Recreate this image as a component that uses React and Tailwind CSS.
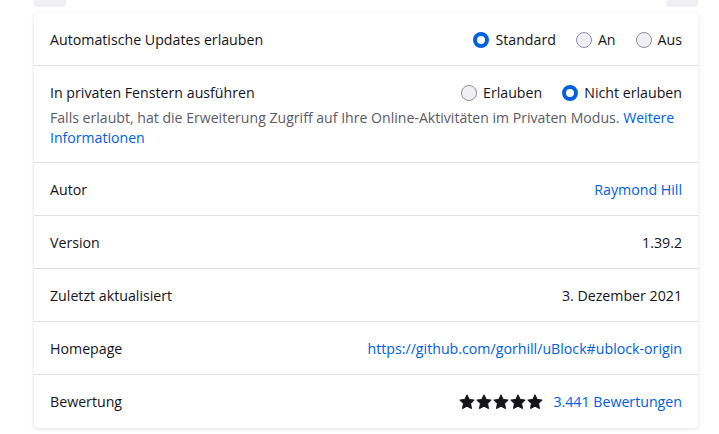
import React from 'react';

// Firefox about:addons style detail card
function Radio({ checked, label }) {
  return (
    <label className="flex items-center gap-[6px]">
      {checked ? (
        <span className="w-[16px] h-[16px] rounded-full border-[4px] border-[#0061e0] bg-white box-border" />
      ) : (
        <span className="w-[16px] h-[16px] rounded-full border border-[#8f8f9d] bg-[#f0f0f4] box-border" />
      )}
      <span>{label}</span>
    </label>
  );
}

function Star() {
  return (
    <svg width="16" height="16" viewBox="0 0 16 16" className="block">
      <path
        d="M8 0.8l2.2 4.6 5 0.7-3.6 3.5 0.9 5-4.5-2.4-4.5 2.4 0.9-5L0.8 6.1l5-0.7z"
        fill="#15141a"
        stroke="#15141a"
        strokeWidth="1"
        strokeLinejoin="round"
      />
    </svg>
  );
}

function Row({ label, children, last }) {
  return (
    <div
      className={`h-[53px] px-[16px] pt-[1px] flex items-center justify-between ${
        last ? '' : 'border-b border-[#e0e0e6]'
      }`}
    >
      <span>{label}</span>
      <div className="flex items-center">{children}</div>
    </div>
  );
}

export default function App() {
  return (
    <div
      className="w-[719px] h-[434px] bg-white overflow-hidden text-[14.2px] leading-[20px] text-[#15141a]"
      style={{ fontFamily: '"Open Sans", "Noto Sans", sans-serif' }}
    >
      <div className="ml-[34px] w-[664px]">
        <div className="flex justify-between">
          <div className="w-[32px] h-[7px] rounded-b-[4px] bg-[#f0f0f4]" />
          <div className="w-[32px] h-[7px] rounded-b-[4px] bg-[#f0f0f4]" />
        </div>

        <div className="mt-[6px] bg-white rounded-[4px] shadow-[0_1px_4px_rgba(12,12,13,0.12)]">
          <div className="h-[53px] px-[16px] pt-[1px] flex items-center justify-between border-b border-[#e0e0e6]">
            <span>Automatische Updates erlauben</span>
            <div className="flex items-center gap-[20px]">
              <Radio checked label="Standard" />
              <Radio label="An" />
              <Radio label="Aus" />
            </div>
          </div>

          <div className="px-[16px] pt-[17px] pb-[14px] border-b border-[#e0e0e6]">
            <div className="flex items-center justify-between">
              <span>In privaten Fenstern ausführen</span>
              <div className="flex items-center gap-[20px]">
                <Radio label="Erlauben" />
                <Radio checked label="Nicht erlauben" />
              </div>
            </div>
            <p className="mt-[5px] text-[14.1px] text-[#5b5b66]">
              Falls erlaubt, hat die Erweiterung Zugriff auf Ihre Online-Aktivitäten im Privaten Modus.{' '}
              <a className="text-[#0061e0]">Weitere Informationen</a>
            </p>
          </div>

          <Row label="Autor">
            <a className="text-[#0061e0]">Raymond Hill</a>
          </Row>
          <Row label="Version">
            <span>1.39.2</span>
          </Row>
          <Row label="Zuletzt aktualisiert">
            <span>3. Dezember 2021</span>
          </Row>
          <Row label="Homepage">
            <a className="text-[#0061e0]">https://github.com/gorhill/uBlock#ublock-origin</a>
          </Row>
          <Row label="Bewertung" last>
            <div className="flex items-center gap-[1px] mr-[10px]">
              <Star />
              <Star />
              <Star />
              <Star />
              <Star />
            </div>
            <a className="text-[#0061e0]">3.441 Bewertungen</a>
          </Row>
        </div>
      </div>
    </div>
  );
}
